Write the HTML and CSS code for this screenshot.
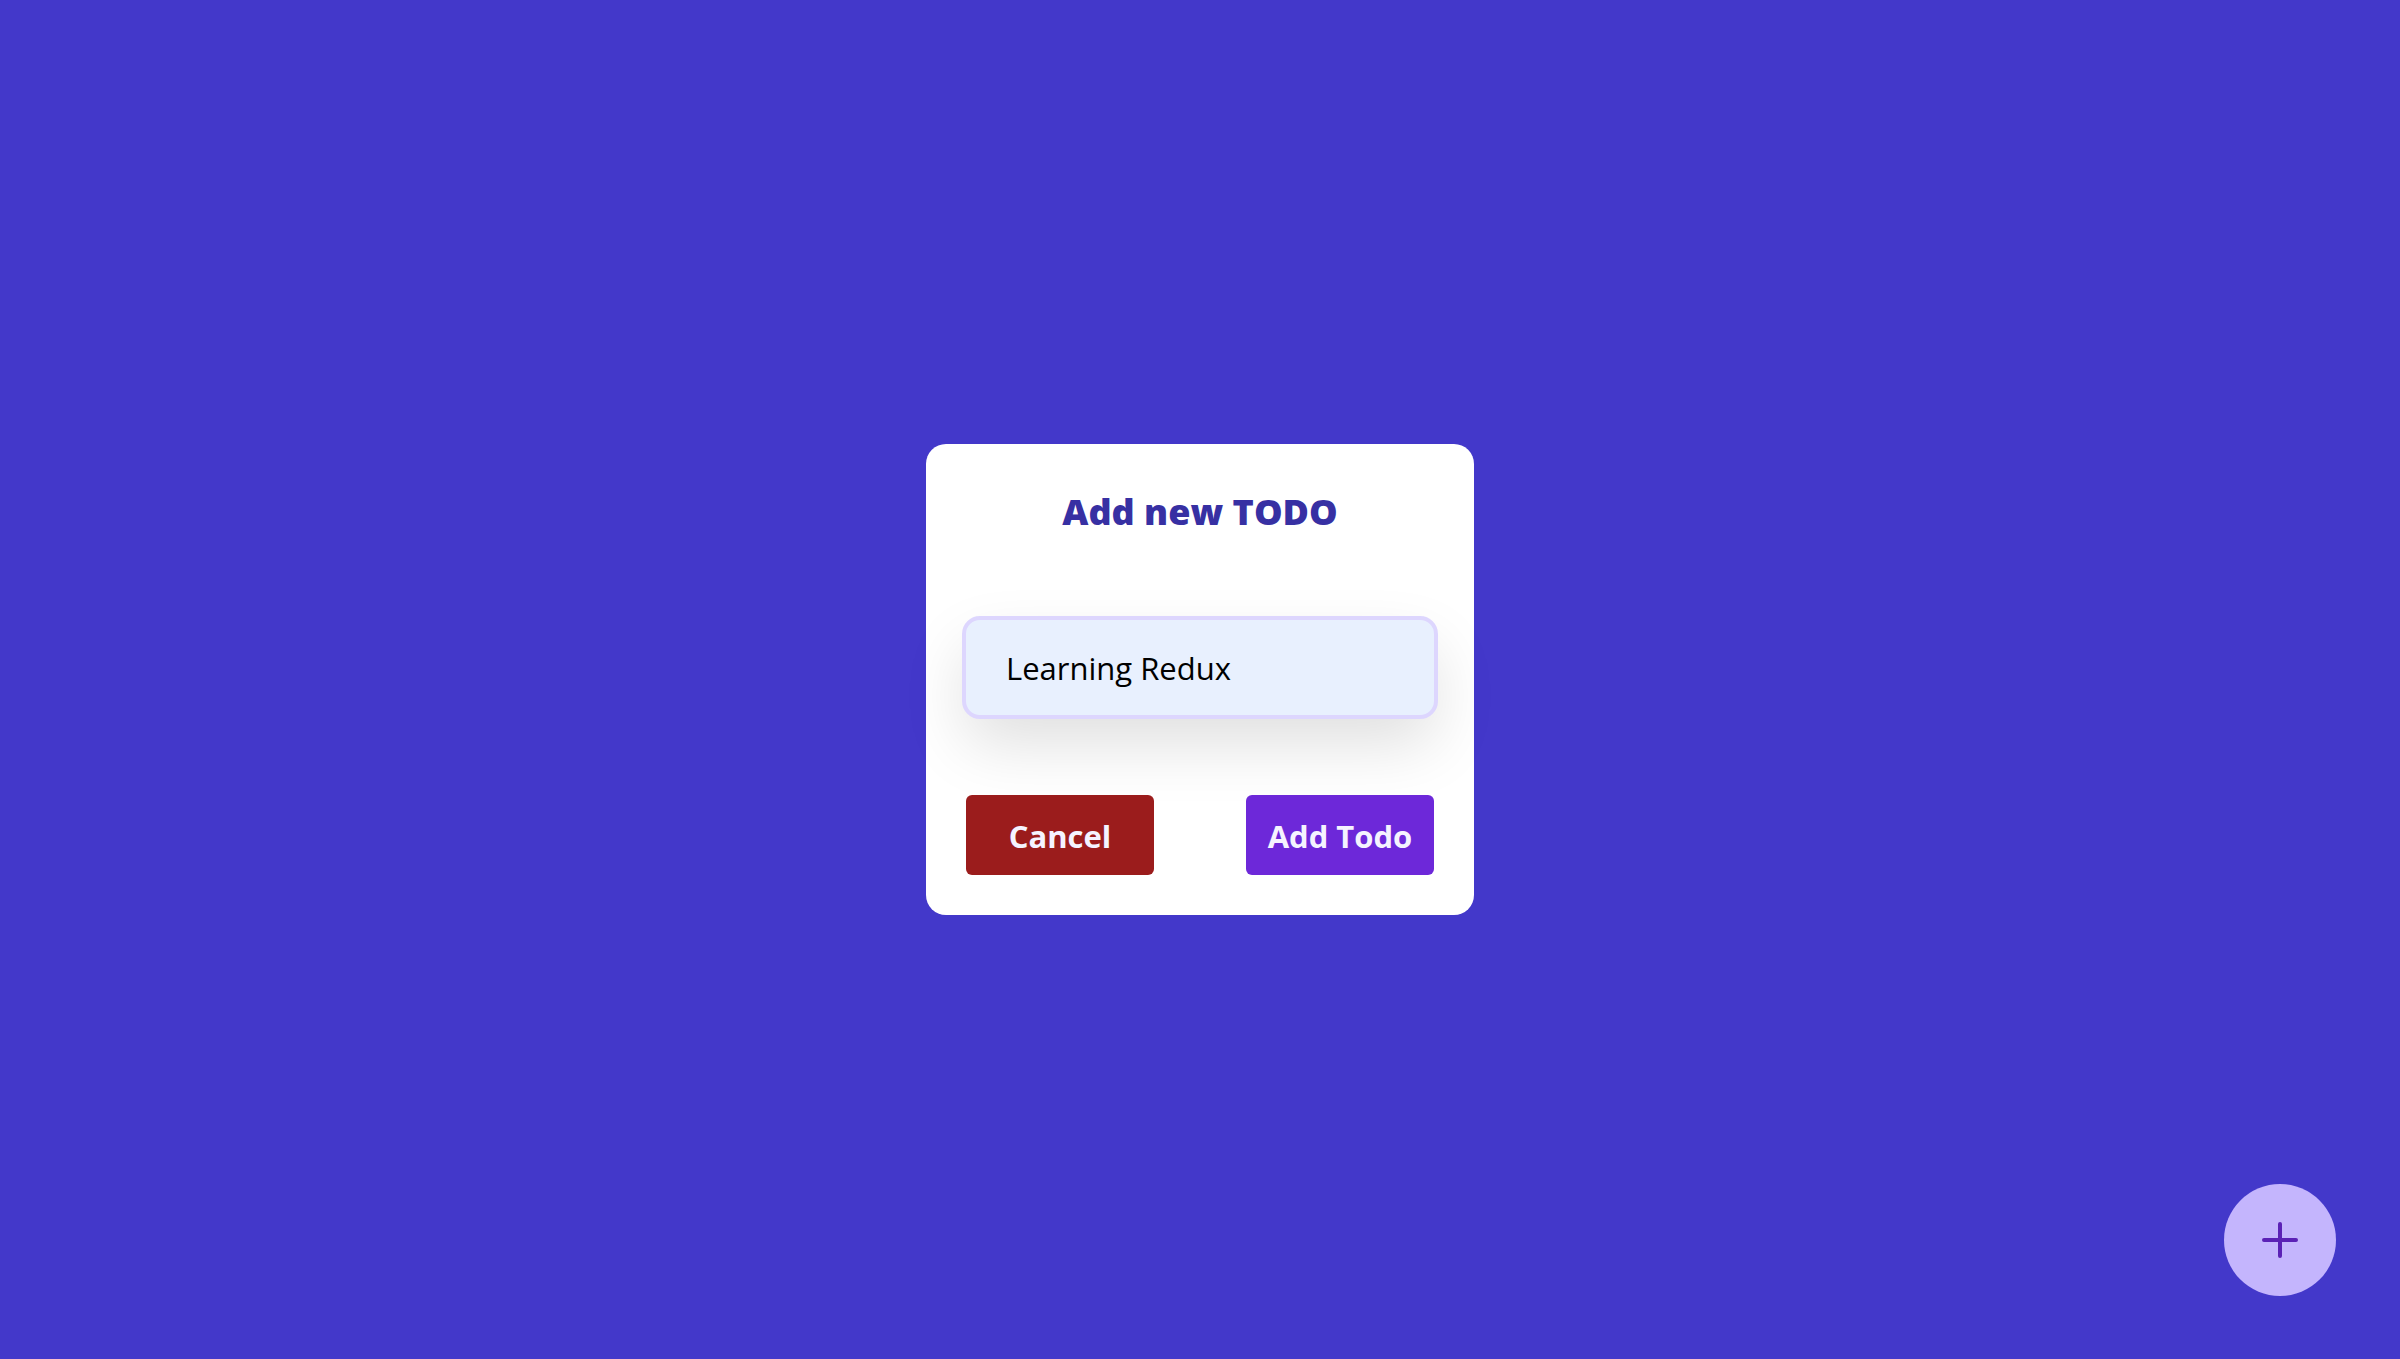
FILE: index.html
```html
<!DOCTYPE html>
<html lang="en">
<head>
<meta charset="utf-8">
<title>Todo</title>
<link rel="stylesheet" href="styles.css">
</head>
<body>
<main class="screen">
  <section class="modal">
    <h1 class="modal-title">Add new TODO</h1>
    <div class="field">Learning Redux</div>
    <div class="actions">
      <button class="btn btn-cancel" type="button">Cancel</button>
      <button class="btn btn-add" type="button">Add Todo</button>
    </div>
  </section>
  <button class="fab" type="button" aria-label="Add">
    <svg width="36" height="36" viewBox="0 0 36 36" fill="none" stroke="currentColor" stroke-width="4" stroke-linecap="round">
      <path d="M18 2v32M2 18h32"/>
    </svg>
  </button>
</main>
</body>
</html>
```

FILE: styles.css
```css
* { box-sizing: border-box; }
html, body { margin: 0; padding: 0; }
body {
  background: #4338ca;
  font-family: "Open Sans", "Noto Sans", sans-serif;
}
.screen {
  min-height: 100vh;
  display: flex;
  align-items: center;
  justify-content: center;
}
.modal {
  width: 548px;
  height: 471px;
  background: #ffffff;
  border-radius: 20px;
  padding: 40px;
  display: flex;
  flex-direction: column;
  align-items: center;
}
.modal-title {
  margin: 0;
  font-size: 36px;
  line-height: 40px;
  font-weight: 800;
  color: #3730a3;
  padding-top: 8px;
}
.field {
  margin-top: 84px;
  width: 476px;
  height: 103px;
  background: #e8f0fe;
  border: 4px solid #ddd6fe;
  border-radius: 18px;
  padding-left: 40px;
  display: flex;
  align-items: center;
  font-size: 31px;
  color: #000;
  box-shadow: 0 28px 64px -4px rgba(0, 0, 0, 0.13);
}
.actions {
  margin-top: auto;
  width: 100%;
  display: flex;
  justify-content: space-between;
}
.btn {
  width: 188px;
  height: 80px;
  border: 0;
  border-radius: 6px;
  font-family: inherit;
  font-size: 31px;
  font-weight: 700;
  color: #f5f3ff;
  cursor: pointer;
  padding: 2px 0 0;
}
.btn-cancel { background: #9b1c1c; }
.btn-add { background: #6d28d9; }
.fab {
  position: fixed;
  right: 64px;
  bottom: 63px;
  width: 112px;
  height: 112px;
  border-radius: 50%;
  border: 0;
  background: #c4b5fd;
  color: #5b21b6;
  display: flex;
  align-items: center;
  justify-content: center;
  padding: 0;
}
```
